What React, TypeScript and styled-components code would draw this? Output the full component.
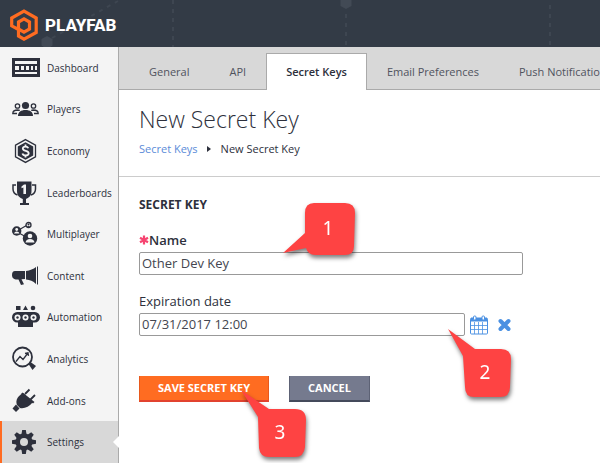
import React from "react";
import styled, { createGlobalStyle } from "styled-components";

const ink = "#2d303c";

const GlobalStyle = createGlobalStyle`
  * { box-sizing: border-box; }
  body { margin: 0; background: #fff; color: ${ink}; font-family: "Open Sans", "Noto Sans", sans-serif; font-size: 12px; }
  h1, h2, ul { margin: 0; padding: 0; }
  button, input { font-family: inherit; }
`;

const Page = styled.div`
  position: relative;
  overflow: hidden;
`;

const Header = styled.header`
  position: relative;
  height: 47px;
  padding: 9px 10px 0;
  background: #333b46;
`;

const HeaderPattern = styled.svg`
  position: absolute;
  left: 0;
  top: 0;
`;

const Brand = styled.a`
  position: relative;
  display: inline-flex;
  align-items: center;
  gap: 7px;
  color: #fff;
  font: 800 17px/32px Roboto, "Open Sans", sans-serif;
  text-decoration: none;
`;

const Body = styled.div`
  display: flex;
  align-items: flex-start;
`;

const Sidebar = styled.nav`
  flex: none;
  display: grid;
  grid-auto-rows: 1fr;
  width: 119px;
  height: 416px;
  background: #f4f4f4;
  border-right: 1px solid #aaa;
`;

const SideLink = styled.a<{ $active?: boolean }>`
  position: relative;
  display: grid;
  grid-template-columns: 28px 1fr;
  column-gap: 7px;
  align-items: center;
  padding-left: ${(p) => (p.$active ? 10 : 12)}px;
  border-left: ${(p) => (p.$active ? "2px solid #ff6b21" : "0")};
  background: ${(p) => (p.$active ? "#d8d8d8" : "transparent")};
  color: ${ink};
  font-size: 10px;
  line-height: 16px;
  text-decoration: none;
`;

const ActiveNotch = styled.span`
  position: absolute;
  right: -1px;
  top: 50%;
  margin-top: -6px;
  border: 6px solid transparent;
  border-left-width: 0;
  border-right-color: #fff;
`;

const Main = styled.main`
  flex: 1;
  min-width: 0;
`;

const Tabs = styled.nav`
  display: flex;
  align-items: flex-end;
  height: 43px;
  padding-left: 10px;
  overflow: hidden;
  background: linear-gradient(#aaa, #aaa) bottom / 100% 1px no-repeat #d8d8d8;
`;

const Tab = styled.a<{ $active?: boolean }>`
  flex: none;
  height: 37px;
  padding: ${(p) => (p.$active ? "10px 19px 0" : "11px 20px 0")};
  border: solid #aaa;
  border-width: ${(p) => (p.$active ? "1px 1px 0" : "0")};
  background: ${(p) => (p.$active ? "#fff" : "transparent")};
  color: ${(p) => (p.$active ? ink : "#50535e")};
  font-size: 11px;
  font-weight: ${(p) => (p.$active ? 600 : 400)};
  line-height: 16px;
  text-decoration: none;
  white-space: nowrap;
`;

const Intro = styled.section`
  padding: 12px 20px 19px;
  border-bottom: 1px solid #ccc;
`;

const Title = styled.h1`
  font-size: 23px;
  font-weight: 300;
  line-height: 34px;
`;

const Crumbs = styled.div`
  display: flex;
  align-items: center;
  gap: 9px;
  margin-top: 5px;
  font-size: 11px;
  line-height: 16px;
  a { color: #5b8bd8; text-decoration: none; }
`;

const Form = styled.form`
  padding: 19px 20px;
`;

const SectionTitle = styled.h2`
  font-size: 12px;
  font-weight: 700;
  line-height: 18px;
`;

const Label = styled.label<{ $strong?: boolean }>`
  display: flex;
  align-items: center;
  margin-top: 17px;
  font-size: 13px;
  font-weight: ${(p) => (p.$strong ? 600 : 400)};
  line-height: 18px;
`;

const FieldRow = styled.div`
  display: flex;
  align-items: center;
  margin-top: 3px;
`;

const Field = styled.input<{ $wide?: boolean }>`
  flex: 0 1 ${(p) => (p.$wide ? 384 : 326)}px;
  min-width: 0;
  height: 23px;
  padding: 0 2px 2px;
  border: 1px solid #999;
  border-radius: 2px;
  background: #fff;
  color: #44464f;
  font-size: 13px;
`;

const IconButton = styled.button`
  display: flex;
  margin-left: 5px;
  padding: 0;
  border: 0;
  background: none;
`;

const Actions = styled.div`
  display: flex;
  align-items: flex-start;
  gap: 20px;
  margin-top: 40px;
`;

const Button = styled.button<{ $primary?: boolean }>`
  height: 26px;
  padding: 0 18px;
  border: solid ${(p) => (p.$primary ? "#e8591c" : "#5d6275")};
  border-width: 0 1px 2px;
  border-bottom-color: ${(p) => (p.$primary ? "#e2432f" : "#444a5b")};
  background: ${(p) => (p.$primary ? "#ff6c21" : "#757a8e")};
  color: #fff;
  font-size: 11px;
  font-weight: 700;
  line-height: 24px;
`;

const Callout = styled.svg<{ $x: number; $y: number }>`
  position: absolute;
  left: ${(p) => p.$x}px;
  top: ${(p) => p.$y}px;
  overflow: visible;
  pointer-events: none;
  filter: drop-shadow(1px 3px 2px rgba(0, 0, 0, 0.5));
  text { fill: #fff; font: 19px "Noto Sans", "Open Sans", sans-serif; text-anchor: middle; }
`;

const Svg = ({ children }: { children: React.ReactNode }) => (
  <svg width="28" height="28" viewBox="0 0 28 28" fill={ink} aria-hidden="true">{children}</svg>
);

const bg = "#f4f4f4";

const icons: Record<string, React.ReactNode> = {
  Dashboard: (
    <Svg>
      <path d="M0 4h28v19H0z" />
      <path d="M3 7h22v3H3zM3 18h22v2H3zM3 12h4v4H3zM9 12h3v4H9zM14 12h3v4h-3zM19 12h2v4h-2zM23 12h2v4h-2z" fill={bg} />
    </Svg>
  ),
  Players: (
    <Svg>
      <circle cx="13.5" cy="10.5" r="3.6" />
      <path d="M6 21c0-4 3-6 7.500-6s7.500 2 7.500 6z" />
      <g fill="none" stroke={ink} strokeWidth="1.300">
        <circle cx="5.500" cy="11" r="2.200" /><circle cx="21.500" cy="11" r="2.200" />
        <path d="M5 18.500H.800c0-2 1.500-3.500 5-3.500l2 .300M22 18.500h4.200c0-2-1.500-3.500-5-3.500l-2 .300" />
      </g>
    </Svg>
  ),
  Economy: (
    <Svg>
      <path d="M13.500 2.600 23.500 8.200v11.600l-10 5.600-10-5.600V8.200z" fill="none" stroke={ink} strokeWidth="1.300" />
      <path d="M13.500 5.200 21.200 9.500v9l-7.700 4.300-7.700-4.300v-9z" />
      <path d="M16.300 11.300c-.4-1.200-1.300-1.700-2.800-1.700-1.600 0-2.700.8-2.700 2 0 3.100 5.900 1.500 5.900 4.600 0 1.400-1.200 2.200-3.100 2.200-1.700 0-2.800-.6-3.200-1.900M13.500 7.500v2.300M13.500 18v2.500" fill="none" stroke={bg} strokeWidth="1.800" />
    </Svg>
  ),
  Leaderboards: (
    <Svg>
      <path d="M5 2.500h14.500V12c0 5-3 7-5.500 8v4h3v2H8v-2h2.800v-4C8 19 5 17 5 12z" />
      <path d="M4 6H1v4c0 3 1.500 5 4.500 6M20 6h3.500v4c0 3-1.500 5-4.500 6" fill="none" stroke={ink} strokeWidth="1.500" />
      <path d="M9.500 7.500 12 5.500h2V15h-2.600V8.500l-1.900.7z" fill={bg} />
    </Svg>
  ),
  Multiplayer: (
    <Svg>
      <path d="m5 11 12-7M5 12l13 7" stroke={ink} strokeWidth="1.200" />
      <circle cx="4.700" cy="11" r="4.700" /><circle cx="18" cy="18.500" r="7.200" />
      <circle cx="16.500" cy="5" r="2.500" fill={bg} stroke={ink} strokeWidth="1.300" />
      <circle cx="16.500" cy="4.500" r="1" /><path d="M14.500 7q2-2 4 0z" />
      <g fill={bg}><circle cx="4.700" cy="9.500" r="1.400" /><path d="M2 13.500q.5-2 2.700-2t2.700 2z" /><circle cx="18" cy="16" r="2.300" /><path d="M13.500 22.500q.5-3.500 4.500-3.500t4.500 3.500z" /></g>
    </Svg>
  ),
  Content: (
    <Svg>
      <path d="M3 9h10v8l-3.500.300 2.500 5-3 .700-2.500-5.500C2 18 0 16 0 13c0-2.500 1-4 3-4zM14 9c4-.500 7.500-2 10-4v17c-3-3-6-4-10-4.500zM25 4.500h1v18h-1z" />
    </Svg>
  ),
  Automation: (
    <Svg>
      <path d="M4 3h4.500v4H4zM11 7l2.500-4.500L16 7z" /><circle cx="21" cy="5" r="2.300" />
      <rect y="9" width="28" height="10.500" rx="5.200" /><path d="M6 19h15v5H6z" />
      <g fill={bg}><circle cx="5.500" cy="14.500" r="3" /><circle cx="13.500" cy="14.500" r="3" /><circle cx="21.500" cy="14.500" r="3" /></g>
      <circle cx="5.500" cy="14.500" r="1.200" /><circle cx="13.500" cy="14.500" r="1.200" /><circle cx="21.500" cy="14.500" r="1.200" />
    </Svg>
  ),
  Analytics: (
    <Svg>
      <circle cx="10.500" cy="12" r="9.500" fill="none" stroke={ink} strokeWidth="1.800" />
      <path d="m4 16.500 4-5 3 3 5-6.500M13 8.500l3-.700.500 3" fill="none" stroke={ink} strokeWidth="1.300" />
      <path d="m16.500 19 2-2 5.500 4-3.500 4z" />
    </Svg>
  ),
  "Add-ons": (
    <Svg>
      <path d="m.500 21.500 3.500-4 3.500 4L4 25z" />
      <path d="M5 18c-2-5 1-9 6-12L21 15c-4 5-9 7-13 6z" />
      <path d="m13 7 4.500-4.500M18.500 12.500 23 8" stroke={ink} strokeWidth="1.800" />
      <path d="m10.500 5.500 12 9.500-1.500 1.500-12-9.500z" />
    </Svg>
  ),
  Settings: (
    <Svg>
      <g transform="translate(12 14)">
        {[0, 45, 90, 135].map((a) => (
          <path key={a} d="M-2.500-8-1.800-12h3.600L2.500-8V8L1.800 12h-3.600L-2.500 8z" transform={`rotate(${a})`} />
        ))}
        <circle r="8.500" /><circle r="4" fill="#d8d8d8" />
      </g>
    </Svg>
  ),
};

const tabs = ["General", "API", "Secret Keys", "Email Preferences", "Push Notifications"];

export default function App() {
  return (
    <Page>
      <GlobalStyle />
      <Header>
        <HeaderPattern width="100%" height="47" aria-hidden="true">
          <path d="M47 36l5.500 3v6.500L47 49l-5.500-3.500V39zM346-3l5.500 3v6L346 9l-5.500-3V0z" fill="#424a55" />
          <path d="M52 38 118 1M173 0v47M346 14v33M550 5v42" fill="none" stroke="#3e4651" strokeWidth="2" strokeDasharray="4 5" />
        </HeaderPattern>
        <Brand href="#">
          <svg width="28" height="32" viewBox="0 0 28 32" fill="none" stroke="#ff6c21" strokeWidth="3.200" aria-hidden="true">
            <path d="M8.500 20.500 1.700 16.800V9L14 2.200 26.200 9v14.500L14 30.200 8.500 27V13L14 9.800l5.500 3.200v7L14 23.200 8.500 20" />
          </svg>
          PLAYFAB
        </Brand>
      </Header>
      <Body>
        <Sidebar>
          {Object.keys(icons).map((name) => (
            <SideLink key={name} href="#" $active={name === "Settings"}>
              {icons[name]}
              {name}
              {name === "Settings" && <ActiveNotch />}
            </SideLink>
          ))}
        </Sidebar>
        <Main>
          <Tabs>
            {tabs.map((t) => <Tab key={t} href="#" $active={t === "Secret Keys"}>{t}</Tab>)}
          </Tabs>
          <Intro>
            <Title>New Secret Key</Title>
            <Crumbs>
              <a href="#">Secret Keys</a>
              <svg width="5" height="6" aria-hidden="true"><path d="M0 0l4 3-4 3z" fill={ink} /></svg>
              <span>New Secret Key</span>
            </Crumbs>
          </Intro>
          <Form onSubmit={(e) => e.preventDefault()}>
            <SectionTitle>SECRET KEY</SectionTitle>
            <Label htmlFor="name" $strong>
              <svg width="10" height="10" viewBox="-5 -5 10 10" stroke="#f64470" strokeWidth="2.200" aria-hidden="true">
                <path d="M0-4.500v9M-4-2.300l8 4.600M-4 2.300l8-4.600" />
              </svg>
              Name
            </Label>
            <FieldRow><Field id="name" $wide defaultValue="Other Dev Key" /></FieldRow>
            <Label htmlFor="expires">Expiration date</Label>
            <FieldRow>
              <Field id="expires" defaultValue="07/31/2017 12:00" />
              <IconButton type="button" aria-label="Choose date">
                <svg width="18" height="20" viewBox="0 0 18 20" fill="none" stroke="#4a90e2">
                  <rect x=".5" y="3.500" width="17" height="15.500" rx="1" />
                  <path d="M1 3h16v3H1z" fill="#4a90e2" />
                  <path d="M4.500 7v12M8.500 7v12M12.500 7v12M1 10.500h16M1 14.500h16" strokeWidth=".8" />
                  <rect x="3.500" y="1" width="2.500" height="4" rx="1" fill="#fff" /><rect x="12" y="1" width="2.500" height="4" rx="1" fill="#fff" />
                </svg>
              </IconButton>
              <IconButton type="button" aria-label="Clear date">
                <svg width="22" height="20" viewBox="0 0 22 20"><path d="m7.500 6 8 8M15.500 6l-8 8" stroke="#4a90e2" strokeWidth="4" strokeLinecap="round" /></svg>
              </IconButton>
            </FieldRow>
            <Actions>
              <Button type="submit" $primary>SAVE SECRET KEY</Button>
              <Button type="button">CANCEL</Button>
            </Actions>
          </Form>
        </Main>
      </Body>
      <Callout $x={283} $y={203} width="72" height="52">
        <path d="M0 50 22 30V10Q22 0 31 0H62Q72 0 72 10L71 43Q71 52 62 52H32Q25 52 23 45z" fill="#fe4343" />
        <text x="45" y="32">1</text>
      </Callout>
      <Callout $x={448} $y={329} width="63" height="68">
        <path d="M0 0 27 20H53Q63 20 63 30L62 58Q62 68 52 68H26Q17 68 17 58L15 27z" fill="#fe4343" />
        <text x="37" y="50">2</text>
      </Callout>
      <Callout $x={241} $y={390} width="65" height="67">
        <path d="M0 0 28 19H54Q65 19 65 30L64 57Q63 67 54 67H28Q19 67 18 58L17 27z" fill="#fe4343" />
        <text x="39" y="49">3</text>
      </Callout>
    </Page>
  );
}
